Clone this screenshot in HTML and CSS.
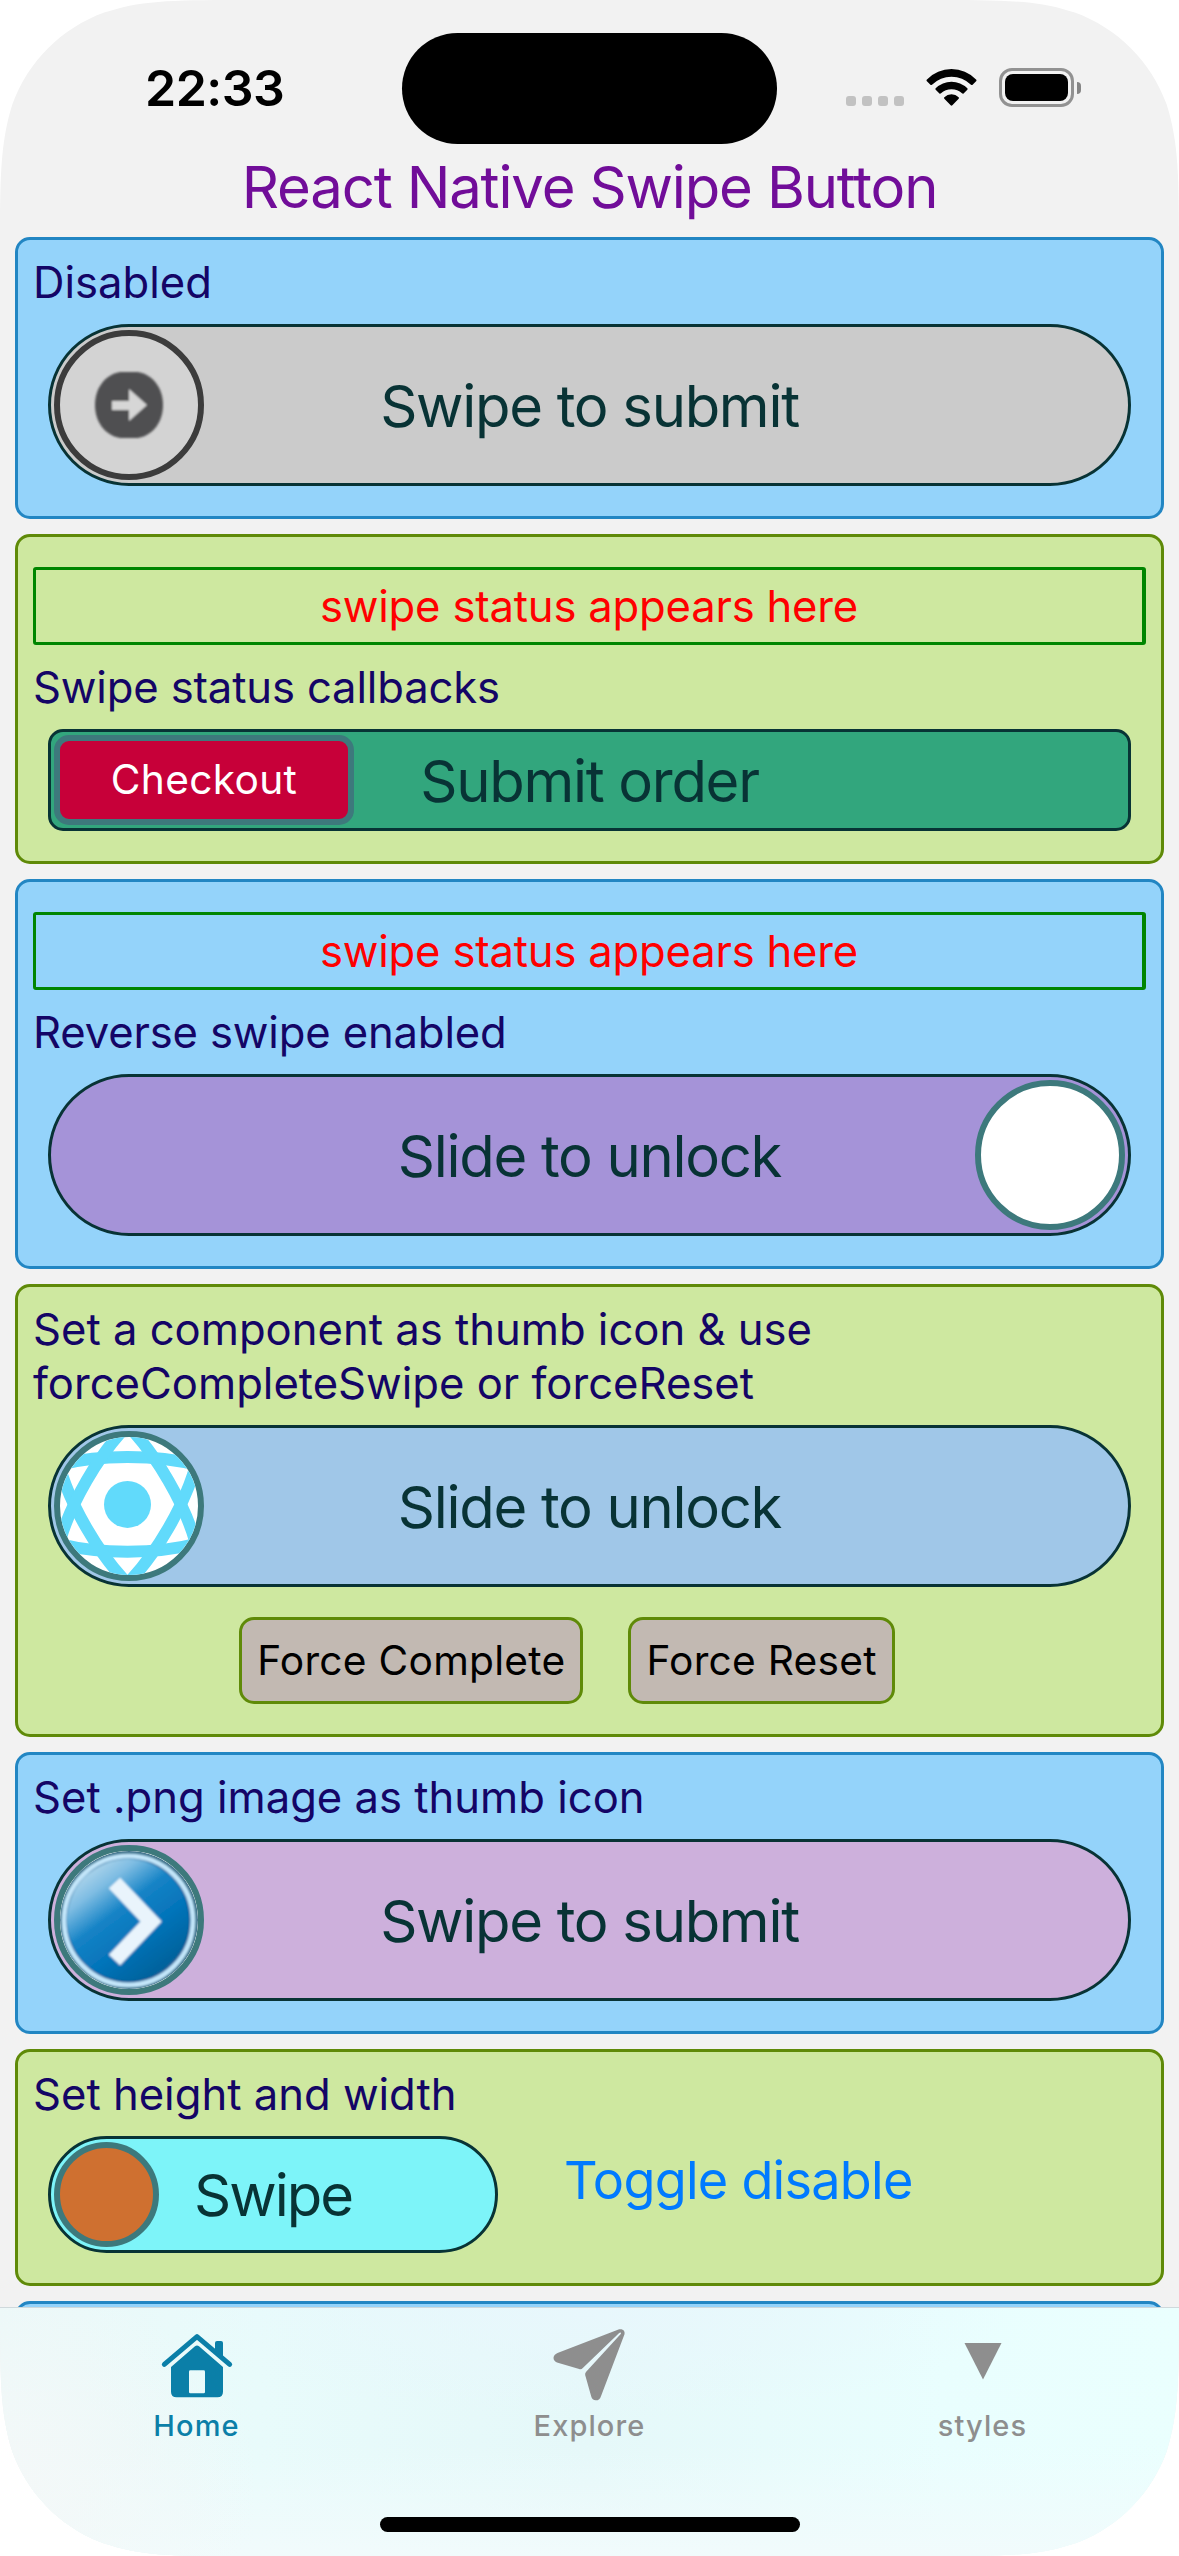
FILE: index.html
```html
<!DOCTYPE html>
<html lang="en">
<head>
<meta charset="utf-8">
<title>React Native Swipe Button</title>
<link rel="stylesheet" href="styles.css">
</head>
<body>
<div class="screen">
  <header class="status-bar">
    <div class="clock">22:33</div>
    <div class="island"></div>
    <div class="indicators">
      <div class="cell"><i></i><i></i><i></i><i></i></div>
      <svg class="wifi" viewBox="0 0 151 111" aria-hidden="true">
        <path d="M1 32Q33 0 75.500 0Q118 0 150 32Q151 34 150 36L138 48Q136 49 134 47Q109 23 75.500 23Q42 23 17 47Q15 49 13 48L1 36Q0 34 1 32Z"/>
        <path d="M28 58Q48 38 75.500 38Q103 38 123 58Q125 60 123 62L111 74Q109 75 107 73Q94 61 75.500 61Q57 61 44 73Q42 75 40 74L28 62Q26 60 28 58Z"/>
        <path d="M54 85Q63 76 75.500 76Q88 76 97 85Q99 87 97 89L78 109Q75.500 111 73 109L54 89Q52 87 54 85Z"/>
      </svg>
      <div class="battery"><div class="battery-shell"><div class="battery-level"></div></div><div class="battery-nub"></div></div>
    </div>
  </header>

  <main class="content">
    <h1 class="title">React Native Swipe Button</h1>

    <section class="card blue">
      <p class="label">Disabled</p>
      <div class="track disabled">
        <div class="thumb">
          <svg class="thumb-art" viewBox="0 0 138 138" aria-hidden="true">
            <defs><filter id="soft" x="-20%" y="-20%" width="140%" height="140%"><feGaussianBlur stdDeviation="1"/></filter></defs>
            <g filter="url(#soft)">
              <path d="M60 36H78C94 39 103 53 103 69S94 99 78 102H60C44 99 35 85 35 69S44 39 60 36Z" fill="#4f4f51"/>
              <path d="M52 65H69V53L87 69L69 85V74H52Z" fill="#d6d6d6"/>
            </g>
          </svg>
        </div>
        <span class="track-title">Swipe to submit</span>
      </div>
    </section>

    <section class="card green">
      <div class="status">swipe status appears here</div>
      <p class="label">Swipe status callbacks</p>
      <div class="track order">
        <div class="thumb">Checkout</div>
        <span class="track-title">Submit order</span>
      </div>
    </section>

    <section class="card blue">
      <div class="status">swipe status appears here</div>
      <p class="label">Reverse swipe enabled</p>
      <div class="track reverse">
        <div class="thumb"></div>
        <span class="track-title">Slide to unlock</span>
      </div>
    </section>

    <section class="card green">
      <p class="label">Set a component as thumb icon &amp; use<br>forceCompleteSwipe or forceReset</p>
      <div class="track component">
        <div class="thumb">
          <svg class="thumb-art" viewBox="0 0 138 138" aria-hidden="true">
            <g transform="translate(67.500 67.400)" fill="none" stroke="#61dafb" stroke-width="12">
              <circle r="23.500" fill="#61dafb" stroke="none"/>
              <ellipse rx="124" ry="47.300"/>
              <ellipse rx="124" ry="47.300" transform="rotate(60)"/>
              <ellipse rx="124" ry="47.300" transform="rotate(120)"/>
            </g>
          </svg>
        </div>
        <span class="track-title">Slide to unlock</span>
      </div>
      <div class="actions">
        <button class="action">Force Complete</button>
        <button class="action">Force Reset</button>
      </div>
    </section>

    <section class="card blue">
      <p class="label">Set .png image as thumb icon</p>
      <div class="track image">
        <div class="thumb">
          <svg class="thumb-art" viewBox="0 0 138 138" aria-hidden="true">
            <defs>
              <linearGradient id="ball" x1="0.150" y1="0.080" x2="0.800" y2="0.950">
                <stop offset="0" stop-color="#b4d8ec"/>
                <stop offset="0.180" stop-color="#7fbde3"/>
                <stop offset="0.400" stop-color="#1583c6"/>
                <stop offset="0.650" stop-color="#0474ba"/>
                <stop offset="1" stop-color="#075f97"/>
              </linearGradient>
              <filter id="smooth"><feGaussianBlur stdDeviation="0.900"/></filter>
            </defs>
            <circle cx="69" cy="69" r="69" fill="#3d6f88"/>
            <g filter="url(#smooth)">
              <circle cx="68.500" cy="69.500" r="64.500" fill="#0b5a92" stroke="#c3e6fa" stroke-width="5"/>
              <circle cx="68" cy="69" r="61" fill="url(#ball)"/>
              <path d="M54.500 32L91 70.500L54.500 109" fill="none" stroke="#e9f4fc" stroke-width="15.500"/>
            </g>
          </svg>
        </div>
        <span class="track-title">Swipe to submit</span>
      </div>
    </section>

    <section class="card green">
      <p class="label">Set height and width</p>
      <div class="row">
        <div class="track small">
          <div class="thumb"></div>
          <span class="track-title">Swipe</span>
        </div>
        <a class="toggle">Toggle disable</a>
      </div>
    </section>

    <section class="card blue"></section>
  </main>

  <nav class="tab-bar">
    <div class="tabs">
      <a class="tab active">
        <svg viewBox="60 80 222 222" aria-hidden="true">
          <path d="M73 192L171 109L269 192" fill="none" stroke="currentColor" stroke-width="15" stroke-linecap="round" stroke-linejoin="round"/>
          <path d="M225 152V128Q225 122 231 122H243Q249 122 249 128V174Z" fill="currentColor"/>
          <path fill-rule="evenodd" d="M165 138Q171 133 177 138L249 200V274Q249 291 232 291H110Q93 291 93 274V200ZM151 210Q147 210 147 214V275Q147 279 151 279H191Q195 279 195 275V214Q195 210 191 210Z" fill="currentColor"/>
        </svg>
        <span>Home</span>
      </a>
      <a class="tab">
        <svg viewBox="1237.500 80 222 222" aria-hidden="true">
          <path fill="currentColor" d="M1436 87C1448 85 1454 92 1452 102L1382 286Q1378 300 1366 300Q1355 300 1352 288L1334 224Q1333 218 1337 214L1440 102Q1443 98 1441 97Q1439 95 1436 98L1327 203Q1322 208 1316 206L1252 187Q1239 183 1239 172Q1240 163 1251 158Z"/>
        </svg>
        <span>Explore</span>
      </a>
      <a class="tab">
        <svg viewBox="0 0 74 74" aria-hidden="true"><path d="M18.500 16H55.500L37 52.500Z" fill="currentColor"/></svg>
        <span>styles</span>
      </a>
    </div>
    <div class="home-indicator"></div>
  </nav>
</div>
</body>
</html>
```
FILE: styles.css
```css
* { box-sizing: border-box; }

body {
  margin: 0;
  background: #fff;
  font-family: Inter, "Liberation Sans", sans-serif;
}

p, h1 { margin: 0; font-weight: 400; }

/* Display outline with continuous corners */
.screen {
  width: 1179px;
  height: 2556px;
  display: flex;
  flex-direction: column;
  overflow: hidden;
  background: #f2f2f2;
  clip-path: path("M252.2 0H926.8C999.4 0 1035.7 0 1068.5 10.8L1074.8 12.4C1117.500 27.900 1151.100 61.500 1166.600 104.200C1179 143.300 1179 179.600 1179 252.200V2303.800C1179 2376.400 1179 2412.700 1166.600 2451.800C1151.100 2494.500 1117.500 2528.100 1074.800 2543.600L1068.500 2545.200C1035.700 2556 999.400 2556 926.800 2556H252.200C179.600 2556 143.300 2556 110.500 2545.200L104.200 2543.600C61.500 2528.100 27.900 2494.500 12.400 2451.800C0 2412.700 0 2376.400 0 2303.800V252.200C0 179.600 0 143.300 12.400 104.200C27.900 61.500 61.500 27.900 104.200 12.400L110.500 10.800C143.300 0 179.600 0 252.200 0Z");
}

.status-bar {
  flex: none;
  height: 151px;
  padding-top: 33px;
  display: flex;
}

.clock {
  width: 402px;
  padding: 24px 0 0 145px;
  font-size: 50px;
  line-height: 62px;
  font-weight: 600;
  letter-spacing: -0.5px;
}

.island {
  width: 375px;
  height: 111px;
  border-radius: 56px;
  background: #000;
}

.indicators {
  display: flex;
  align-items: flex-end;
  height: 74px;
  padding-left: 69px;
}

.cell { display: flex; gap: 6px; padding-bottom: 1px; }
.cell i { width: 10px; height: 10px; border-radius: 3px; background: #c2c2c2; }
.wifi { width: 51px; height: 37px; margin: 0 22px 1px; }

.battery { display: flex; align-items: center; gap: 3px; }

.battery-shell {
  width: 75px;
  height: 39px;
  padding: 3px;
  border: 3px solid #929292;
  border-radius: 13px;
}

.battery-level { height: 27px; border-radius: 8px; background: #000; }
.battery-nub { width: 4px; height: 12px; border-radius: 0 4px 4px 0; background: #858585; }

.content {
  flex: 1;
  min-height: 0;
  overflow: hidden;
  padding: 0 15px;
  display: flex;
  flex-direction: column;
  gap: 15px;
}

.title {
  flex: none;
  height: 71px;
  line-height: 72px;
  font-size: 58px;
  letter-spacing: -1.15px;
  text-align: center;
  color: #710d99;
}

.card {
  flex: none;
  min-height: 36px;
  padding: 15px;
  border: 3px solid;
  border-radius: 15px;
}

.blue { background: #94d3fa; border-color: #2286c3; }
.green { background: #cee8a0; border-color: #5f8a08; }

.label {
  padding-top: 1px;
  margin-bottom: -1px;
  font-size: 43.6px;
  line-height: 54px;
  color: #140566;
}

.status {
  margin: 15px 0;
  padding: 10px 9px 8px;
  border: 3px solid #008500;
  border-right-width: 4px;
  border-radius: 3px;
  font-size: 43.6px;
  line-height: 54px;
  letter-spacing: -0.2px;
  text-align: center;
  color: #f00;
}

.status + .label { letter-spacing: -0.15px; }

.track {
  display: grid;
  grid-template: 100% / 100%;
  align-items: center;
  height: 162px;
  margin: 15px;
  padding: 3px;
  border: 3px solid #083335;
  border-radius: 81px;
}

.track > * { grid-area: 1 / 1; }

.track-title {
  padding-top: 2px;
  font-size: 58px;
  line-height: 72px;
  letter-spacing: -1.3px;
  text-align: center;
  color: #083335;
}

.thumb {
  width: 150px;
  height: 150px;
  border: 6px solid #3d797c;
  border-radius: 75px;
  background: #fff;
  overflow: hidden;
}

.thumb-art { display: block; width: 138px; height: 138px; }

.disabled { background: #cbcbcb; }
.disabled .thumb { background: #d3d3d3; border-color: #3c3c3c; }

.order { height: 102px; border-radius: 15px; background: #32a67d; }

.order .thumb {
  width: 300px;
  height: 90px;
  border-radius: 15px;
  background: #c70039;
  font-size: 40.7px;
  line-height: 77px;
  letter-spacing: 0.3px;
  text-align: center;
  color: #fff;
}

.reverse { background: #a593d8; }
.reverse .thumb { justify-self: end; }
.component { background: #a0c7e8; }
.image { background: #cdb0dc; }

.row { display: flex; align-items: flex-start; margin-top: 15px; }

.small { width: 450px; height: 117px; margin-top: 0; background: #7df4f9; }
.small .thumb { width: 105px; height: 105px; background: #cf7030; }
.small .track-title { letter-spacing: -2px; padding-top: 1px; }

.toggle {
  margin: 12px 0 0 51px;
  font-size: 52.2px;
  line-height: 64px;
  letter-spacing: -0.75px;
  color: #007aff;
}

.actions { display: flex; justify-content: center; margin: 30px 0 15px; }

.action {
  height: 87px;
  margin: 0 45px 0 0;
  padding: 15px;
  border: 3px solid #5f8a08;
  border-radius: 15px;
  background: #c2b9b2;
  font: 40.7px/51px Inter, "Liberation Sans", sans-serif;
  letter-spacing: 0.25px;
  color: #000;
}

.tab-bar {
  flex: none;
  height: 249px;
  border-top: 1px solid #cfd9dc;
  background:
    radial-gradient(420px 110px at 50% 0, #e8f7fc, transparent),
    radial-gradient(260px 200px at 0 70%, #f4f8f8, transparent),
    linear-gradient(to bottom, transparent 55%, #f1fbfc),
    linear-gradient(to right, #ecf8f8, #e8fbfb 22%, #e5f8f9 50%, #e9fefe 80%, #eafffe);
}

.tabs { display: flex; height: 209px; padding-top: 19px; }

.tab {
  flex: 1;
  display: flex;
  flex-direction: column;
  align-items: center;
  font-size: 29px;
  line-height: 36px;
  font-weight: 500;
  letter-spacing: 1.1px;
  color: #8e8e8e;
}

.tab svg { width: 74px; height: 74px; margin-bottom: 7px; }
.active { color: #0b7fa8; }

.home-indicator {
  width: 420px;
  height: 15px;
  margin: 0 auto;
  border-radius: 8px;
  background: #000;
}
```
